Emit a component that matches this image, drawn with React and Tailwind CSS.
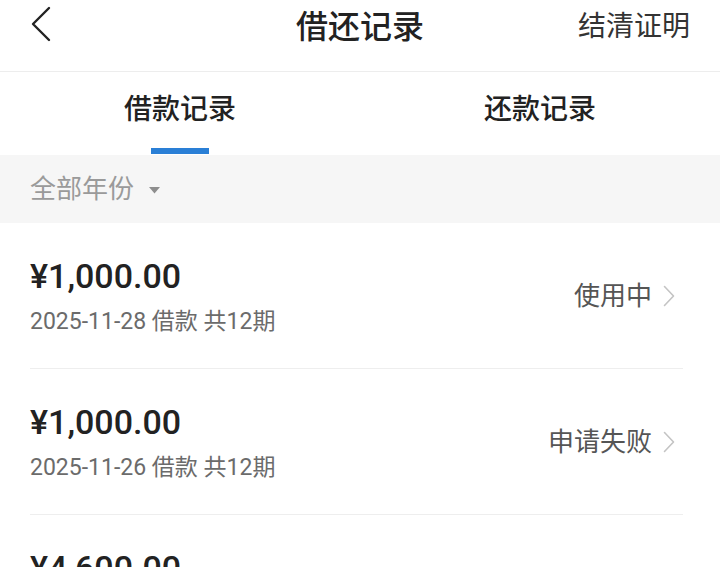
import React from 'react';

const font = { fontFamily: 'Roboto, "Noto Sans CJK SC", sans-serif' };

const records = [
  { amount: '¥1,000.00', date: '2025-11-28', periods: 12, status: '使用中' },
  { amount: '¥1,000.00', date: '2025-11-26', periods: 12, status: '申请失败' },
  { amount: '¥4,600.00', date: '2025-10-09', periods: 12, status: '已结清' },
];

const Chevron = () => (
  <svg width="12" height="22" viewBox="0 0 12 22" fill="none" className="ml-[11px]">
    <path d="M1.5 1.5 L10.5 11 L1.5 20.5" stroke="#c4c4c4" strokeWidth="1.6" strokeLinecap="round" strokeLinejoin="round" />
  </svg>
);

const App = () => {
  return (
    <div className="h-[567px] w-[720px] overflow-hidden bg-white" style={font}>
      {/* header */}
      <div className="relative flex h-[72px] items-center justify-center border-b border-[#ededed]">
        <svg width="22" height="36" viewBox="0 0 22 36" fill="none" className="absolute left-[30px] top-[6px]">
          <path d="M19 2 L3 18 L19 34" stroke="#222" strokeWidth="2.4" strokeLinecap="round" strokeLinejoin="round" />
        </svg>
        <h1 className="-mt-[17px] text-[32px] font-medium leading-[40px] text-[#222]">借还记录</h1>
        <span className="absolute right-[30px] top-[7px] text-[28px] leading-[40px] text-[#333]">结清证明</span>
      </div>

      {/* tabs */}
      <div className="flex h-[83px]">
        <button type="button" className="relative flex flex-1 justify-center pt-[18px]">
          <span className="text-[28px] font-medium leading-[40px] text-[#222]">借款记录</span>
          <span className="absolute bottom-[1px] left-[151px] h-[6px] w-[58px] bg-[#2a7fd6]" />
        </button>
        <button type="button" className="flex flex-1 justify-center pt-[18px]">
          <span className="text-[28px] font-medium leading-[40px] text-[#222]">还款记录</span>
        </button>
      </div>

      {/* filter */}
      <div className="flex h-[68px] items-center bg-[#f6f6f6] px-[30px]">
        <span className="text-[26px] leading-[36px] text-[#9a9a9a]">全部年份</span>
        <svg width="11" height="7" viewBox="0 0 11 7" className="ml-[15px] mt-[2px]">
          <path d="M0 0 H11 L5.5 6.5 Z" fill="#8e8e8e" />
        </svg>
      </div>

      {/* list */}
      <div className="px-[30px]">
        {records.map((item, index) => (
          <div
            key={index}
            className="mr-[7px] flex h-[146px] items-center justify-between border-b border-[#eeeeee] pr-[8px]"
          >
            <div>
              <p className="text-[34px] font-medium leading-[40px] text-[#222]">{item.amount}</p>
              <p className="mt-3 text-[23px] leading-[28px] text-[#6b6b6b]">
                {item.date} 借款 共{item.periods}期
              </p>
            </div>
            <div className="flex items-center">
              <span className="text-[26px] leading-[36px] text-[#555]">{item.status}</span>
              <Chevron />
            </div>
          </div>
        ))}
      </div>
    </div>
  );
};

export default App;
